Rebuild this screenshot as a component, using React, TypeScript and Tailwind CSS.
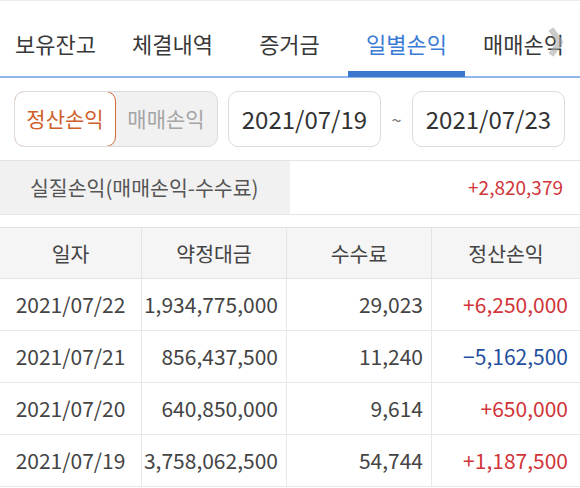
const tabs = ['보유잔고', '체결내역', '증거금', '일별손익', '매매손익'];

const rows = [
  { date: '2021/07/22', amount: '1,934,775,000', fee: '29,023', pnl: '+6,250,000' },
  { date: '2021/07/21', amount: '856,437,500', fee: '11,240', pnl: '−5,162,500' },
  { date: '2021/07/20', amount: '640,850,000', fee: '9,614', pnl: '+650,000' },
  { date: '2021/07/19', amount: '3,758,062,500', fee: '54,744', pnl: '+1,187,500' },
];

export default function App() {
  return (
    <div
      className="w-[580px] h-[488px] overflow-hidden bg-white text-[#333]"
      style={{ fontFamily: '"Noto Sans CJK KR", "Noto Sans", sans-serif' }}
    >
      {/* Tabs */}
      <div className="relative h-[78px] border-t border-[#ececec] border-b-2 border-b-[#8fb6e8] flex items-stretch ml-[-3px]">
        {tabs.map((t, i) => (
          <div
            key={t}
            className={`relative w-[117px] shrink-0 flex items-center justify-center text-[22px] pt-[10px] ${
              i === 3 ? 'text-[#3a7bd5]' : 'text-[#383838]'
            }`}
          >
            {t}
            {i === 3 && <div className="absolute left-0 right-0 bottom-[-1px] h-[6px] bg-[#3a78cf]" />}
          </div>
        ))}
        <svg className="absolute right-[16px] top-[24px]" width="16" height="34" viewBox="0 0 16 34">
          <path d="M3 4 L12 17 L3 30" stroke="#a8a8a8" strokeWidth="6" fill="none" opacity="0.6" strokeLinejoin="round" />
        </svg>
      </div>

      {/* Filters */}
      <div className="flex items-center h-[56px] mt-[13px] px-[14px]">
        <div className="flex h-full w-[204px] rounded-[10px] border border-[#dcdcdc] bg-[#f1f1f1] overflow-hidden">
          <div className="w-[102px] flex items-center justify-center rounded-[10px] border-[1.5px] border-[#d0693a] bg-white text-[#cf5f2c] text-[21px] -m-px">
            정산손익
          </div>
          <div className="flex-1 flex items-center justify-center text-[#a5a5a5] text-[21px]">매매손익</div>
        </div>
        <div className="ml-[10px] w-[153px] h-full rounded-[10px] border border-[#dcdcdc] flex items-center justify-center text-[24px] text-[#333]">
          2021/07/19
        </div>
        <div className="w-[31px] text-center text-[#777] text-[18px]">~</div>
        <div className="w-[153px] h-full rounded-[10px] border border-[#dcdcdc] flex items-center justify-center text-[24px] text-[#333]">
          2021/07/23
        </div>
      </div>

      {/* Summary */}
      <div className="mt-[13px] flex h-[55px] border-y border-[#e4e4e4]">
        <div className="w-[290px] bg-[#f1f1f1] flex items-center pl-[30px] text-[20.5px] text-[#555]">
          실질손익(매매손익-수수료)
        </div>
        <div className="flex-1 flex items-center justify-end pr-[17px] text-[19px] text-[#d0353a]">+2,820,379</div>
      </div>

      {/* Table */}
      <div className="mt-[12px] border-t border-[#e2e2e2]">
        <div className="grid grid-cols-[142px_145px_145px_1fr] h-[51px] bg-[#f5f5f5] border-b border-[#e4e4e4] text-[20.5px] text-[#444]">
          {['일자', '약정대금', '수수료', '정산손익'].map((h, i) => (
            <div key={h} className={`flex items-center justify-center ${i < 3 ? 'border-r border-[#e4e4e4]' : ''}`}>
              {h}
            </div>
          ))}
        </div>
        {rows.map((r) => (
          <div
            key={r.date}
            className="grid grid-cols-[142px_145px_145px_1fr] h-[52px] border-b border-[#e8e8e8] text-[21px] text-[#444]"
          >
            <div className="flex items-center justify-center border-r border-[#e8e8e8]">{r.date}</div>
            <div className="flex items-center justify-end pr-[8px] border-r border-[#e8e8e8]">{r.amount}</div>
            <div className="flex items-center justify-end pr-[8px] border-r border-[#e8e8e8]">{r.fee}</div>
            <div
              className={`flex items-center justify-end pr-[12px] ${
                r.pnl.startsWith('+') ? 'text-[#d0353a]' : 'text-[#1f4f9e]'
              }`}
            >
              {r.pnl}
            </div>
          </div>
        ))}
      </div>
    </div>
  );
}
